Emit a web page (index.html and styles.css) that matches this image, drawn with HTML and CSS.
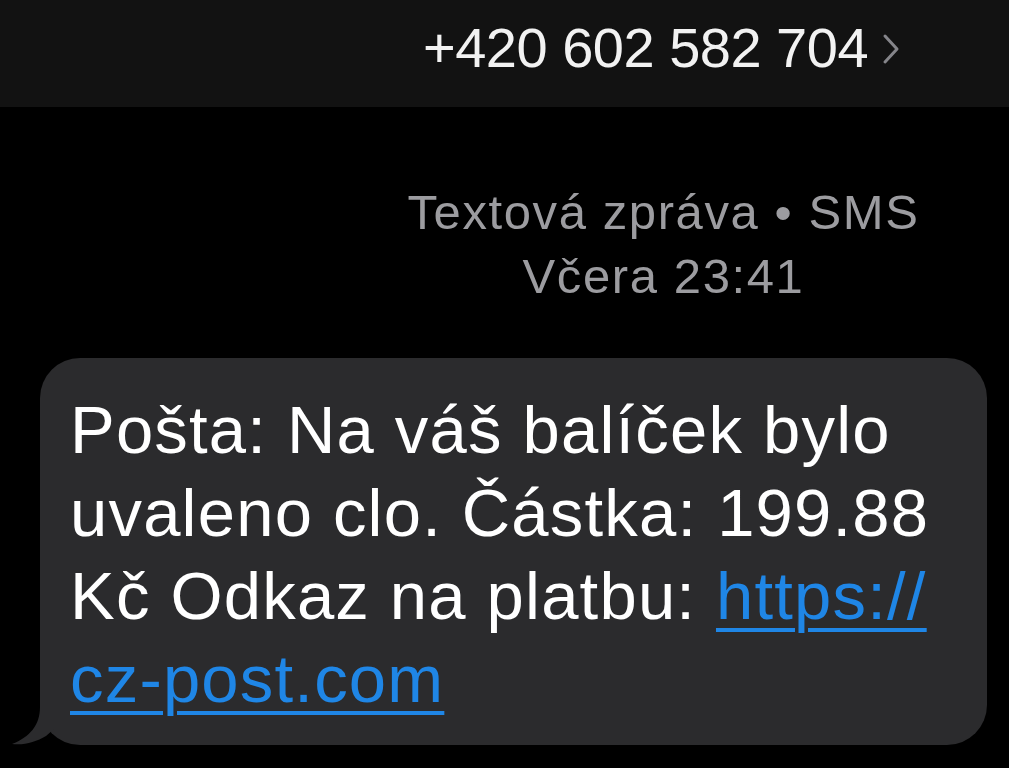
FILE: index.html
```html
<!DOCTYPE html>
<html lang="cs">
<head>
  <meta charset="UTF-8">
  <title>Zprávy</title>
  <link rel="stylesheet" href="styles.css">
</head>
<body>

  <div class="top-bar">
    <span class="contact">+420 602 582 704</span>
    <svg class="chevron" width="18" height="32" viewBox="0 0 18 32">
      <polyline points="3,3 15,16 3,29" fill="none" stroke="#85858a" stroke-width="3" stroke-linecap="round" stroke-linejoin="round" />
    </svg>
  </div>

  <div class="meta">
    <div>Textová zpráva • SMS</div>
    <div>Včera 23:41</div>
  </div>

  <div class="thread">
    <div class="bubble">
      Pošta: Na váš balíček bylo uvaleno clo. Částka: 199.88 Kč Odkaz na platbu: <a href="#">https://<br>cz-post.com</a>
      <svg class="tail" width="42" height="46" viewBox="0 0 42 46">
        <path d="M28 0 L28 8 C28 26 18 38 0 45 C12 46.5 24 43 34 37 L42 30 L42 0 Z" fill="#2b2b2d" />
      </svg>
    </div>
  </div>

</body>
</html>
```

FILE: styles.css
```css
* {
  box-sizing: border-box;
}
body {
  margin: 0;
  background: #000;
  font-family: 'Liberation Sans', Arial, sans-serif;
  color: #fff;
  width: 1009px;
  height: 768px;
  overflow: hidden;
}

.top-bar {
  height: 107px;
  background: #121212;
  display: flex;
  align-items: center;
  justify-content: center;
  padding-left: 314px;
  padding-bottom: 12px;
  gap: 14px;
}
.contact {
  font-size: 56px;
  color: #f2f2f2;
  letter-spacing: -0.5px;
}
.chevron {
  margin-top: 2px;
}

.meta {
  margin-top: 73px;
  padding-left: 318px;
  text-align: center;
  color: #9c9ca0;
  font-size: 49px;
  line-height: 64px;
  letter-spacing: 1.6px;
}

.thread {
  padding: 50px 22px 0 40px;
}
.bubble {
  position: relative;
  background: #2b2b2d;
  border-radius: 40px;
  padding: 30px 20px 25px 30px;
  font-size: 67px;
  line-height: 83px;
  letter-spacing: 1.2px;
  color: #fff;
}
.bubble a {
  color: #1f86e6;
  text-decoration: underline;
  text-decoration-thickness: 4px;
  text-underline-offset: 9px;
}
.tail {
  position: absolute;
  left: -28px;
  bottom: 0;
}
```
